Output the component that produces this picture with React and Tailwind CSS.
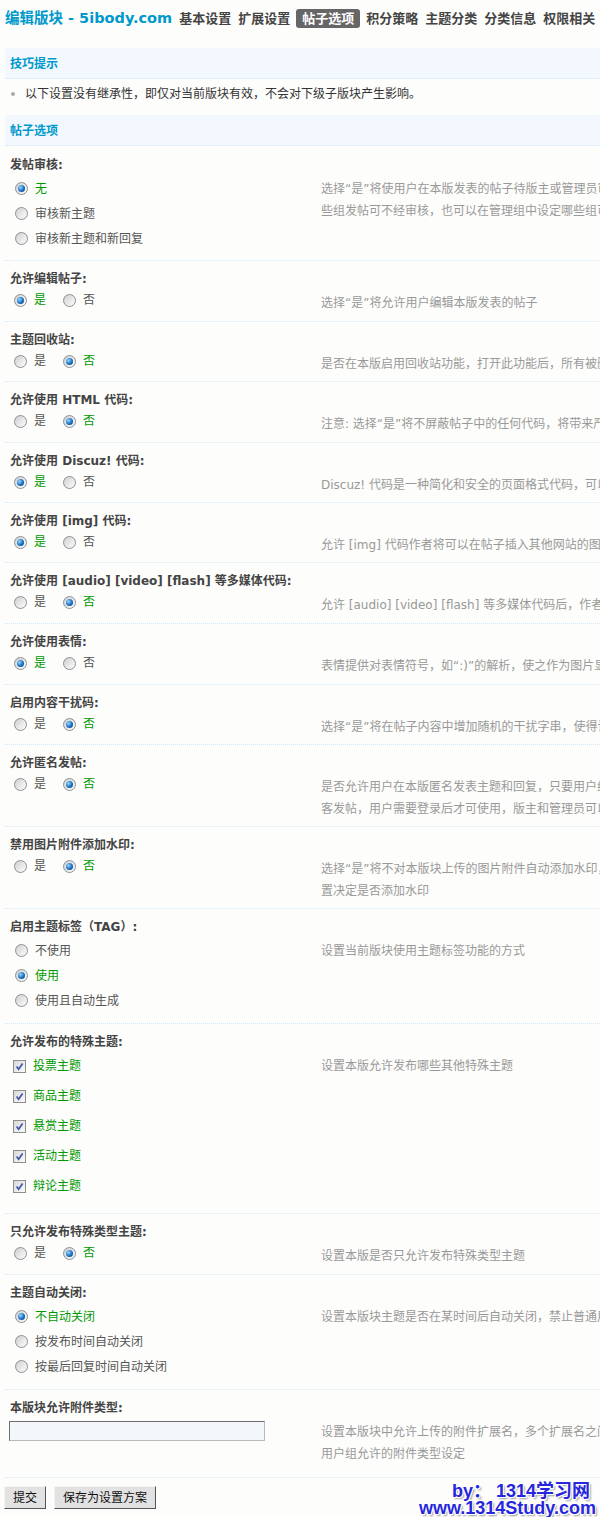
import React from 'react';

const NAV = ['基本设置', '扩展设置', '帖子选项', '积分策略', '主题分类', '分类信息', '权限相关'];

// row heights are taken from the screenshot (each one includes its dotted top border)
const SETTINGS = [
  {
    label: '发帖审核:',
    type: 'list',
    h: 'h-[114px]',
    options: ['无', '审核新主题', '审核新主题和新回复'],
    checked: 0,
    desc: [
      '选择“是”将使用户在本版发表的帖子待版主或管理员审查后才显示出来，打开此功能后，你可以在用户组中设定哪',
      '些组发帖可不经审核，也可以在管理组中设定哪些组可以审核别人的帖子',
    ],
  },
  { label: '允许编辑帖子:', type: 'yesno', h: 'h-[61px]', value: true, desc: ['选择“是”将允许用户编辑本版发表的帖子'] },
  {
    label: '主题回收站:',
    type: 'yesno',
    h: 'h-[60px]',
    value: false,
    desc: ['是否在本版启用回收站功能，打开此功能后，所有被删除的主题将被移动到回收站中，而不是被直接删除'],
  },
  {
    label: '允许使用 HTML 代码:',
    type: 'yesno',
    h: 'h-[61px]',
    value: false,
    desc: ['注意: 选择“是”将不屏蔽帖子中的任何代码，将带来严重的安全隐患，请慎用'],
  },
  {
    label: '允许使用 Discuz! 代码:',
    type: 'yesno',
    h: 'h-[60px]',
    value: true,
    desc: ['Discuz! 代码是一种简化和安全的页面格式代码，可以改善阅读的效果'],
  },
  {
    label: '允许使用 [img] 代码:',
    type: 'yesno',
    h: 'h-[60px]',
    value: true,
    desc: ['允许 [img] 代码作者将可以在帖子插入其他网站的图片并显示'],
  },
  {
    label: '允许使用 [audio] [video] [flash] 等多媒体代码:',
    type: 'yesno',
    h: 'h-[61px]',
    value: false,
    desc: ['允许 [audio] [video] [flash] 等多媒体代码后，作者将可以在帖子中插入多媒体文件并显示'],
  },
  {
    label: '允许使用表情:',
    type: 'yesno',
    h: 'h-[61px]',
    value: true,
    desc: ['表情提供对表情符号，如“:)”的解析，使之作为图片显示'],
  },
  {
    label: '启用内容干扰码:',
    type: 'yesno',
    h: 'h-[60px]',
    value: false,
    desc: ['选择“是”将在帖子内容中增加随机的干扰字串，使得访问者无法复制原始内容'],
  },
  {
    label: '允许匿名发帖:',
    type: 'yesno',
    h: 'h-[82px]',
    value: false,
    desc: [
      '是否允许用户在本版匿名发表主题和回复，只要用户组或本版块允许，用户就可以发表匿名帖子。匿名发帖不同于游',
      '客发帖，用户需要登录后才可使用，版主和管理员可以查看真实作者',
    ],
  },
  {
    label: '禁用图片附件添加水印:',
    type: 'yesno',
    h: 'h-[82px]',
    value: false,
    desc: ['选择“是”将不对本版块上传的图片附件自动添加水印，选择“否”将按照全局设', '置决定是否添加水印'],
  },
  {
    label: '启用主题标签（TAG）:',
    type: 'list',
    h: 'h-[115px]',
    options: ['不使用', '使用', '使用且自动生成'],
    checked: 1,
    desc: ['设置当前版块使用主题标签功能的方式'],
  },
  {
    label: '允许发布的特殊主题:',
    type: 'checks',
    h: 'h-[190px]',
    options: ['投票主题', '商品主题', '悬赏主题', '活动主题', '辩论主题'],
    desc: ['设置本版允许发布哪些其他特殊主题'],
  },
  {
    label: '只允许发布特殊类型主题:',
    type: 'yesno',
    h: 'h-[61px]',
    value: false,
    desc: ['设置本版是否只允许发布特殊类型主题'],
  },
  {
    label: '主题自动关闭:',
    type: 'list',
    h: 'h-[115px]',
    options: ['不自动关闭', '按发布时间自动关闭', '按最后回复时间自动关闭'],
    checked: 0,
    desc: ['设置本版块主题是否在某时间后自动关闭，禁止普通用户回复'],
  },
  {
    label: '本版块允许附件类型:',
    type: 'input',
    h: 'h-[88px]',
    desc: [
      '设置本版块中允许上传的附件扩展名，多个扩展名之间用半角逗号 "," 分割，留空为不限制，本设置将覆盖',
      '用户组允许的附件类型设定',
    ],
  },
];

function Radio({ checked }) {
  return (
    <span className="inline-flex h-[13px] w-[13px] shrink-0 items-center justify-center rounded-full border border-[#8c8f93] bg-[linear-gradient(135deg,#cfd0d2,#fdfdfd)]">
      {checked && (
        <span className="h-[7px] w-[7px] rounded-full bg-[radial-gradient(circle_at_35%_35%,#9ad6ff,#1670c0_55%,#063a74)]" />
      )}
    </span>
  );
}

function Checkbox() {
  return (
    <span className="inline-flex h-[13px] w-[13px] shrink-0 items-center justify-center border border-[#8e8e8e] bg-[linear-gradient(135deg,#d8d8d8,#fbfbfb)]">
      <svg viewBox="0 0 11 11" className="h-[11px] w-[11px]" aria-hidden="true">
        <path d="M2.6 5.6 4.6 8.2 8.6 2.4" fill="none" stroke="#4157a6" strokeWidth="1.7" />
      </svg>
    </span>
  );
}

function Option({ checked, children }) {
  return (
    <span className="inline-flex items-center gap-[7px]">
      <Radio checked={checked} />
      <span className={checked ? 'text-[#009900]' : 'text-[#555]'}>{children}</span>
    </span>
  );
}

function Controls({ item }) {
  if (item.type === 'yesno') {
    return (
      <div className="flex h-[24px] items-center gap-[17px] pl-[4px]">
        <Option checked={item.value}>是</Option>
        <Option checked={!item.value}>否</Option>
      </div>
    );
  }

  if (item.type === 'list') {
    return (
      <div className="pt-[2px] pl-[5px]">
        {item.options.map((opt, i) => (
          <div key={opt} className="flex h-[25px] items-center">
            <Option checked={i === item.checked}>{opt}</Option>
          </div>
        ))}
      </div>
    );
  }

  if (item.type === 'checks') {
    return (
      <div className="pl-[3px]">
        {item.options.map((opt) => (
          <div key={opt} className="flex h-[30px] items-center gap-[7px]">
            <Checkbox />
            <span className="text-[#009900]">{opt}</span>
          </div>
        ))}
      </div>
    );
  }

  return (
    <div className="pt-[4px]">
      <div className="h-[20px] w-[256px] -ml-[1px] border border-[#b9b9b9] border-t-[#6f6f6f] border-l-[#6f6f6f] bg-[#f3f7fc]" />
    </div>
  );
}

function SettingBlock({ item, first }) {
  return (
    <div className={`${item.h} ${first ? '' : 'border-t border-dotted border-[#cfe6f7]'}`}>
      <div className={`${first ? 'pt-[10px]' : 'pt-[9px]'} pl-[5px] text-[12px] leading-[18px] font-bold text-[#444]`}>
        {item.label}
      </div>
      <div className="flex">
        <div className="w-[316px] shrink-0 pl-[5px]">
          <Controls item={item} />
        </div>
        <div className="whitespace-nowrap pt-[4px] text-[12px] leading-[22px] text-[#999]">
          {item.desc.map((line) => (
            <div key={line}>{line}</div>
          ))}
        </div>
      </div>
    </div>
  );
}

function SectionBar({ children }) {
  return (
    <div className="h-[31px] border-b border-dotted border-[#cfe6f7] bg-[#f2f8fd] pt-[1px] pl-[5px] text-[12px] leading-[31px] font-bold text-[#0099cc]">
      {children}
    </div>
  );
}

export default function App() {
  return (
    <div className="relative w-full overflow-hidden bg-[#fdfdfb] font-['DejaVu_Sans','Noto_Sans_CJK_SC',sans-serif] text-[12px]">
      <div className="flex h-[37px] items-center whitespace-nowrap pl-[5px]">
        <span className="text-[14.5px] font-bold text-[#0099cc]">编辑版块 - 5ibody.com</span>
        <div className="ml-[4px] flex items-center gap-[1px]">
          {NAV.map((n) =>
            n === '帖子选项' ? (
              <span key={n} className="mx-[2px] rounded-[3px] bg-[#666] px-[6px] text-[13px] leading-[19px] font-bold text-white">
                {n}
              </span>
            ) : (
              <span key={n} className="px-[3px] text-[13px] leading-[19px] font-bold text-[#444]">
                {n}
              </span>
            )
          )}
        </div>
      </div>

      <div className="mt-[11px] ml-[5px]">
        <SectionBar>技巧提示</SectionBar>
        <div className="flex h-[30px] items-center text-[#333]">
          <span className="ml-[6px] h-[4px] w-[4px] rounded-full bg-[#aaa]" />
          <span className="ml-[10px]">以下设置没有继承性，即仅对当前版块有效，不会对下级子版块产生影响。</span>
        </div>

        <div className="mt-[6px]">
          <SectionBar>帖子选项</SectionBar>
        </div>

        {SETTINGS.map((item, i) => (
          <SettingBlock key={item.label} item={item} first={i === 0} />
        ))}

        <div className="border-t border-dotted border-[#cfe6f7]" />
      </div>

      <div className="flex gap-[8px] pt-[8px] pb-[9px] pl-[4px]">
        <button className="h-[23px] border border-[#f4f4f4] border-r-[#555] border-b-[#555] bg-[#e2e2e2] px-[8px] text-[12px] text-[#111]">
          提交
        </button>
        <button className="h-[23px] border border-[#f4f4f4] border-r-[#555] border-b-[#555] bg-[#e2e2e2] px-[8px] text-[12px] text-[#111]">
          保存为设置方案
        </button>
      </div>

      <div className="absolute right-[4px] bottom-[1px] text-right font-['Liberation_Sans','Noto_Sans_CJK_SC',sans-serif] text-[18px] leading-[17px] font-bold text-[#2626dd] [text-shadow:1px_1px_0_#fff,-1px_-1px_0_#fff,1px_-1px_0_#fff,-1px_1px_0_#fff,2px_2px_2px_#999]">
        <div className="pr-[6px]">by：&nbsp;1314学习网</div>
        <div>www.1314Study.com</div>
      </div>
    </div>
  );
}
